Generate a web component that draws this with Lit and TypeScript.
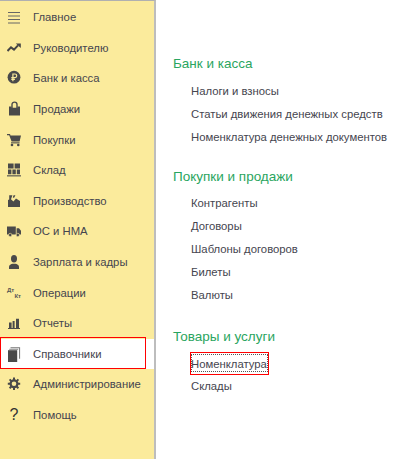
import { LitElement, html, css, svg } from "lit";
import { customElement } from "lit/decorators.js";

const icons: Record<string, unknown> = {
  menu: svg`<path d="M1 3.5h12M1 7h12M1 10.5h12M1 14h12" stroke="#666" stroke-width="1" fill="none"/>`,
  trend: svg`<path d="M0.5 11 4 7.4l3 2.2L11 5.4" stroke="#454545" stroke-width="2" fill="none"/><path d="M8.8 3.4h5v4.6z" fill="#454545"/>`,
  ruble: svg`<circle cx="7" cy="7.2" r="6.4" fill="#4a4a4a"/><path d="M5.9 11.2V4h2a1.8 1.8 0 0 1 0 3.7H4.3M4.3 9.4h3.6" stroke="#fbeb9c" stroke-width="1.2" fill="none"/>`,
  bag: svg`<path d="M5 7.5V3.6a2.5 2.5 0 0 1 5 0V7.5" stroke="#4a4a4a" stroke-width="1.4" fill="none"/><path d="M2 5.6h2.6v1.2h5.8V5.6H13v9H2z" fill="#4a4a4a"/>`,
  cart: svg`<path d="M0 2h3l.5 1.4H14l-1.4 6.2H4.6L2.2 3.2H0z" fill="#4a4a4a"/><rect x="4" y="10.3" width="8.6" height="1.1" fill="#4a4a4a"/><circle cx="5" cy="13" r="1.3" fill="#4a4a4a"/><circle cx="11.3" cy="13" r="1.3" fill="#4a4a4a"/>`,
  grid: svg`<path d="M1 1.5h5.6v5H1zM7.6 1.5H13v5H7.6zM1 7.5h3.4v4.8H1zM5.4 7.5h3.4v4.8H5.4zM9.8 7.5H13v4.8H9.8z" fill="#4a4a4a"/><rect x="0" y="13.3" width="14" height="1.1" fill="#4a4a4a"/>`,
  factory: svg`<path d="M1 14V7l1.2-.6V2.2h3.2L4 6.2l2.4 2.2L9 5.5l4 2.6V14zM6.6 2.2h1.8L7 5 5.8 4.2z" fill="#4a4a4a"/>`,
  truck: svg`<path d="M0 3.5h8.8V11.6H0zM9.6 5.2h2.4L14 7.8v3.8H9.6z" fill="#4a4a4a"/><circle cx="3.2" cy="12" r="1.7" fill="#4a4a4a" stroke="#fbeb9c" stroke-width=".6"/><circle cx="10.8" cy="12" r="1.7" fill="#4a4a4a" stroke="#fbeb9c" stroke-width=".6"/>`,
  user: svg`<ellipse cx="7" cy="4.7" rx="3" ry="3.7" fill="#4a4a4a"/><path d="M2 15v-2.4c0-1.6 2.2-2.5 3.6-2.8h2.8c1.4.3 3.6 1.2 3.6 2.8V15z" fill="#4a4a4a"/>`,
  chart: svg`<path d="M2 7.6h2.6V13H2zM5.6 6h2V13h-2zM9 3.8h3V13H9zM1 13h12v.9H1z" fill="#4a4a4a"/>`,
  books: svg`<path d="M3.5 1.2h9.6v11.6h-1V2.2H3.5z" fill="#777"/><path d="M2.2 2.8h9v1H2.2z" fill="#888"/><path d="M1 4.2h9.2V16H1z" fill="#4a4a4a"/>`,
  gear: svg`<circle cx="7" cy="7.8" r="3.4" fill="none" stroke="#4a4a4a" stroke-width="2.2"/><path d="M7 1.6v2.4M7 11.6v2.4M.8 7.8h2.4M10.8 7.8h2.4M2.6 3.4l1.7 1.7M9.7 10.5l1.7 1.7M2.6 12.2l1.7-1.7M9.7 5.1l1.7-1.7" stroke="#4a4a4a" stroke-width="2"/>`,
};

const items: { t: string; i: string; active?: boolean }[] = [
  { t: "Главное", i: "menu" },
  { t: "Руководителю", i: "trend" },
  { t: "Банк и касса", i: "ruble" },
  { t: "Продажи", i: "bag" },
  { t: "Покупки", i: "cart" },
  { t: "Склад", i: "grid" },
  { t: "Производство", i: "factory" },
  { t: "ОС и НМА", i: "truck" },
  { t: "Зарплата и кадры", i: "user" },
  { t: "Операции", i: "dtkt" },
  { t: "Отчеты", i: "chart" },
  { t: "Справочники", i: "books", active: true },
  { t: "Администрирование", i: "gear" },
  { t: "Помощь", i: "help" },
];

const sections = [
  { t: "Банк и касса", l: ["Налоги и взносы", "Статьи движения денежных средств", "Номенклатура денежных документов"] },
  { t: "Покупки и продажи", l: ["Контрагенты", "Договоры", "Шаблоны договоров", "Билеты", "Валюты"] },
  { t: "Товары и услуги", l: ["Номенклатура", "Склады"] },
];

@customElement("app-root")
export class AppRoot extends LitElement {
  static styles = css`
    :host {
      display: flex;
      width: 412px;
      height: 459px;
      overflow: hidden;
      background: #fff;
      font-family: "Liberation Sans", Arial, sans-serif;
      font-size: 11.3px;
      color: #45454f;
    }
    .side {
      box-sizing: border-box;
      width: 156px;
      height: 459px;
      flex: none;
      background: #fbeb9c;
      border-top: 1px solid #b0b0b0;
      border-right: 2px solid #bdbdbd;
      padding-top: 1px;
      display: flex;
      flex-direction: column;
    }
    .row {
      height: 30.6px;
      flex: none;
      display: flex;
      align-items: center;
      box-sizing: border-box;
      position: relative;
    }
    .row.active {
      background: #fff;
    }
    .mark {
      position: absolute;
      left: 0;
      top: -2px;
      width: 146px;
      height: 32px;
      box-sizing: border-box;
      border: 1px solid #f00;
    }
    .ic {
      width: 14px;
      height: 16px;
      margin-left: 7px;
      margin-right: 12px;
      flex: none;
      display: flex;
      align-items: center;
      justify-content: center;
    }
    .ic svg {
      display: block;
    }
    .dt {
      display: grid;
      width: 14px;
      font: bold 6px/6px "Liberation Sans", sans-serif;
      color: #555;
    }
    .dt span:last-child {
      justify-self: end;
    }
    .help {
      font: normal 16px "Liberation Sans", sans-serif;
      color: #333;
    }
    .main {
      padding: 55px 0 0 17px;
      flex: 1;
      min-width: 0;
    }
    .sec {
      margin-bottom: 19px;
    }
    .sec:nth-child(2) {
      margin-bottom: 21px;
    }
    .sec:nth-child(2) h2 {
      margin-bottom: 7px;
    }
    .sec:nth-child(3) .link:last-child {
      margin-top: -1px;
    }
    h2 {
      margin: 0 0 8px;
      font-weight: normal;
      font-size: 13.5px;
      line-height: 17px;
      color: #2aa560;
    }
    .links {
      display: flex;
      flex-direction: column;
      align-items: flex-start;
      padding-left: 18px;
    }
    .link {
      height: 23px;
      line-height: 23px;
      white-space: nowrap;
      position: relative;
    }
    .link.focus::before {
      content: "";
      position: absolute;
      inset: 1px -1px 4px 0;
      border: 1px dotted #555;
    }
    .link.focus::after {
      content: "";
      position: absolute;
      inset: -1px -2px 1px -1px;
      border: 1px solid #f00;
    }
  `;

  private icon(n: string) {
    if (n === "dtkt") return html`<div class="dt"><span>Дт</span><span>Кт</span></div>`;
    if (n === "help") return html`<div class="help">?</div>`;
    return html`<svg width="14" height="16" viewBox="0 0 14 16">${icons[n]}</svg>`;
  }

  render() {
    return html`
      <div class="side">
        ${items.map(
          (it) => html`<div class="row ${it.active ? "active" : ""}">
            <div class="ic">${this.icon(it.i)}</div>
            <span>${it.t}</span>
            ${it.active ? html`<div class="mark"></div>` : ""}
          </div>`
        )}
      </div>
      <div class="main">
        ${sections.map(
          (s) => html`<div class="sec">
            <h2>${s.t}</h2>
            <div class="links">
              ${s.l.map((l) => html`<div class="link ${l === "Номенклатура" ? "focus" : ""}">${l}</div>`)}
            </div>
          </div>`
        )}
      </div>
    `;
  }
}
